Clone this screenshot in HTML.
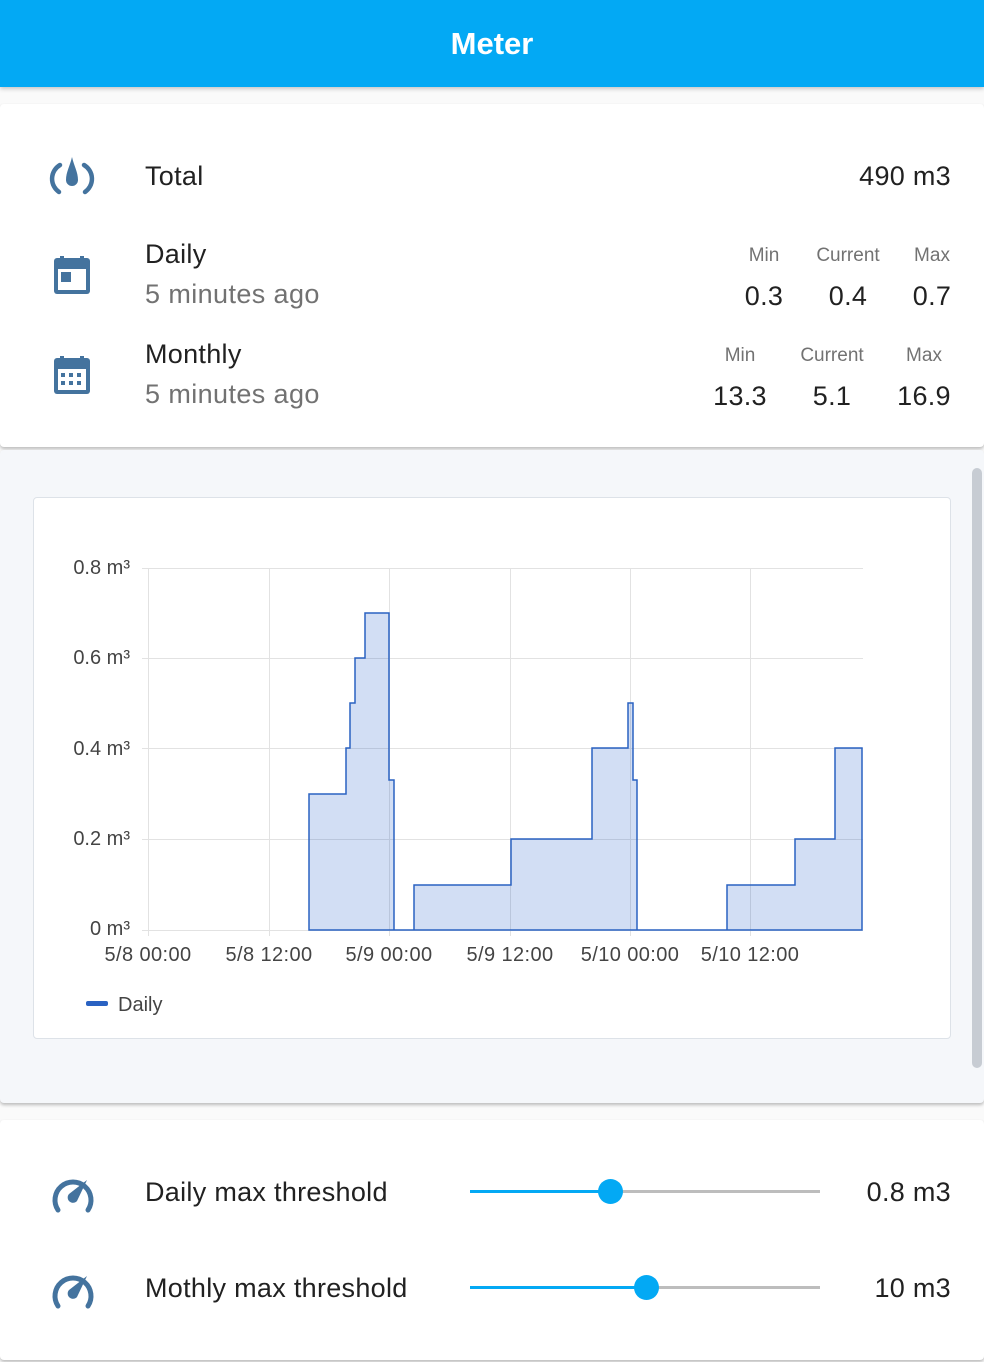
<!DOCTYPE html><html><head><style>
body{margin:0;width:984px;height:1362px;background:#fafafa;font-family:"Liberation Sans",sans-serif;position:relative;overflow:hidden}
.a{position:absolute;white-space:nowrap}
.t{font-size:27px;color:#212121;letter-spacing:0.3px}
.s{font-size:27px;color:#727272;letter-spacing:0.4px}
.h{font-size:19px;color:#727272}
.c{text-align:center;width:80px}
.card{position:absolute;left:0;width:984px;background:#fff;border-radius:4px;box-shadow:0 2px 3px rgba(0,0,0,.25)}
</style></head><body>
<div class="a" style="left:0;top:0;width:984px;height:87px;background:#03a9f4;box-shadow:0 2px 4px rgba(0,0,0,.2)"></div>
<div class="a" style="left:0;width:984px;top:26px;text-align:center;color:#fff;font-size:31px;font-weight:bold">Meter</div>

<div class="card" style="top:104px;height:343px"></div>
<svg class="a" style="left:48px;top:154px" width="48" height="44" viewBox="0 0 48 44"><path d="M11 38 A16 16 0 0 1 12 11" fill="none" stroke="#44739e" stroke-width="4.5" stroke-linecap="round"/><path d="M37 38 A16 16 0 0 0 36 11" fill="none" stroke="#44739e" stroke-width="4.5" stroke-linecap="round"/><path d="M24 3 C26 12 30 18 30 26 A6 6 0 0 1 18 26 C18 18 22 12 24 3Z" fill="#44739e"/></svg>
<svg class="a" style="left:52px;top:252px" width="40" height="44" viewBox="0 0 40 44"><rect x="2" y="6" width="36" height="36" rx="3" fill="#44739e"/><rect x="8" y="4" width="4" height="6" fill="#44739e"/><rect x="28" y="4" width="4" height="6" fill="#44739e"/><rect x="6" y="17" width="28" height="21" fill="#fff"/><rect x="9" y="20" width="10" height="10" fill="#44739e"/></svg>
<svg class="a" style="left:52px;top:352px" width="40" height="44" viewBox="0 0 40 44"><rect x="2" y="6" width="36" height="36" rx="3" fill="#44739e"/><rect x="8" y="4" width="4" height="6" fill="#44739e"/><rect x="28" y="4" width="4" height="6" fill="#44739e"/><rect x="6" y="17" width="28" height="21" fill="#fff"/><g fill="#44739e"><rect x="9" y="21" width="4" height="4"/><rect x="17" y="21" width="4" height="4"/><rect x="25" y="21" width="4" height="4"/><rect x="9" y="29" width="4" height="4"/><rect x="17" y="29" width="4" height="4"/><rect x="25" y="29" width="4" height="4"/></g></svg>
<div class="a t" style="left:145px;top:161px">Total</div>
<div class="a t" style="right:33px;top:161px">490 m3</div>
<div class="a t" style="left:145px;top:239px">Daily</div>
<div class="a s" style="left:145px;top:279px">5 minutes ago</div>
<div class="a t" style="left:145px;top:339px">Monthly</div>
<div class="a s" style="left:145px;top:379px">5 minutes ago</div>
<div class="a h c" style="left:724px;top:245px">Min</div>
<div class="a h c" style="left:808px;top:245px">Current</div>
<div class="a h c" style="left:892px;top:245px">Max</div>
<div class="a t c" style="left:724px;top:281px">0.3</div>
<div class="a t c" style="left:808px;top:281px">0.4</div>
<div class="a t c" style="left:892px;top:281px">0.7</div>
<div class="a h c" style="left:700px;top:345px">Min</div>
<div class="a h c" style="left:792px;top:345px">Current</div>
<div class="a h c" style="left:884px;top:345px">Max</div>
<div class="a t c" style="left:700px;top:381px">13.3</div>
<div class="a t c" style="left:792px;top:381px">5.1</div>
<div class="a t c" style="left:884px;top:381px">16.9</div>

<div class="card" style="top:450px;height:653px;background:#f5f7fa"></div>
<div class="a" style="left:972px;top:468px;width:10px;height:600px;background:#c7ccd3;border-radius:5px"></div>
<div class="a" style="left:33px;top:497px;width:916px;height:540px;background:#fff;border:1px solid #dde2e8;border-radius:4px"></div>
<svg class="a" style="left:0;top:450px" width="984" height="600" viewBox="0 450 984 600" font-family="Liberation Sans" font-size="20" fill="#444">
<g stroke="#e2e2e2" stroke-width="1"><line x1="142" y1="568.5" x2="863" y2="568.5"/><line x1="142" y1="658.5" x2="863" y2="658.5"/><line x1="142" y1="748.5" x2="863" y2="748.5"/><line x1="142" y1="839.5" x2="863" y2="839.5"/><line x1="142" y1="930.5" x2="863" y2="930.5"/>
<line x1="148.5" y1="568" x2="148.5" y2="936"/><line x1="269.5" y1="568" x2="269.5" y2="936"/><line x1="389.5" y1="568" x2="389.5" y2="936"/><line x1="510.5" y1="568" x2="510.5" y2="936"/><line x1="630.5" y1="568" x2="630.5" y2="936"/><line x1="750.5" y1="568" x2="750.5" y2="936"/></g>
<path d="M309 930V794H346V748H350V703H355V658H365V613H389V780H394V930H414V885H511V839H592V748H628V703H633V780H637V930H727V885H795V839H835V748H862V930Z" fill="rgba(30,90,200,.2)" stroke="#2a62c2" stroke-width="1.5"/>
<g text-anchor="end"><text x="130" y="574">0.8 m³</text><text x="130" y="664">0.6 m³</text><text x="130" y="755">0.4 m³</text><text x="130" y="845">0.2 m³</text><text x="130" y="935">0 m³</text></g>
<g text-anchor="middle" letter-spacing="0.4"><text x="148" y="961">5/8 00:00</text><text x="269" y="961">5/8 12:00</text><text x="389" y="961">5/9 00:00</text><text x="510" y="961">5/9 12:00</text><text x="630" y="961">5/10 00:00</text><text x="750" y="961">5/10 12:00</text></g>
<rect x="86" y="1001" width="22" height="5" rx="2" fill="#2a62c2"/><text x="118" y="1011">Daily</text>
</svg>

<div class="card" style="top:1120px;height:240px"></div>
<svg class="a" style="left:50px;top:1172px" width="46" height="42" viewBox="0 0 46 42"><path d="M8 38 A18 18 0 1 1 38 38" fill="none" stroke="#44739e" stroke-width="5" stroke-linecap="round"/><path d="M37 8 L27 29 A5 5 0 1 1 19 22Z" fill="#44739e"/></svg>
<svg class="a" style="left:50px;top:1268px" width="46" height="42" viewBox="0 0 46 42"><path d="M8 38 A18 18 0 1 1 38 38" fill="none" stroke="#44739e" stroke-width="5" stroke-linecap="round"/><path d="M37 8 L27 29 A5 5 0 1 1 19 22Z" fill="#44739e"/></svg>
<div class="a t" style="left:145px;top:1177px">Daily max threshold</div>
<div class="a t" style="left:145px;top:1273px">Mothly max threshold</div>
<div class="a t" style="right:33px;top:1177px">0.8 m3</div>
<div class="a t" style="right:33px;top:1273px">10 m3</div>
<div class="a" style="left:470px;top:1190px;width:350px;height:3px;background:#bdbdbd"></div>
<div class="a" style="left:470px;top:1190px;width:140px;height:3px;background:#03a9f4"></div>
<div class="a" style="left:598px;top:1179px;width:25px;height:25px;border-radius:50%;background:#03a9f4"></div>
<div class="a" style="left:470px;top:1286px;width:350px;height:3px;background:#bdbdbd"></div>
<div class="a" style="left:470px;top:1286px;width:176px;height:3px;background:#03a9f4"></div>
<div class="a" style="left:634px;top:1275px;width:25px;height:25px;border-radius:50%;background:#03a9f4"></div>
</body></html>
